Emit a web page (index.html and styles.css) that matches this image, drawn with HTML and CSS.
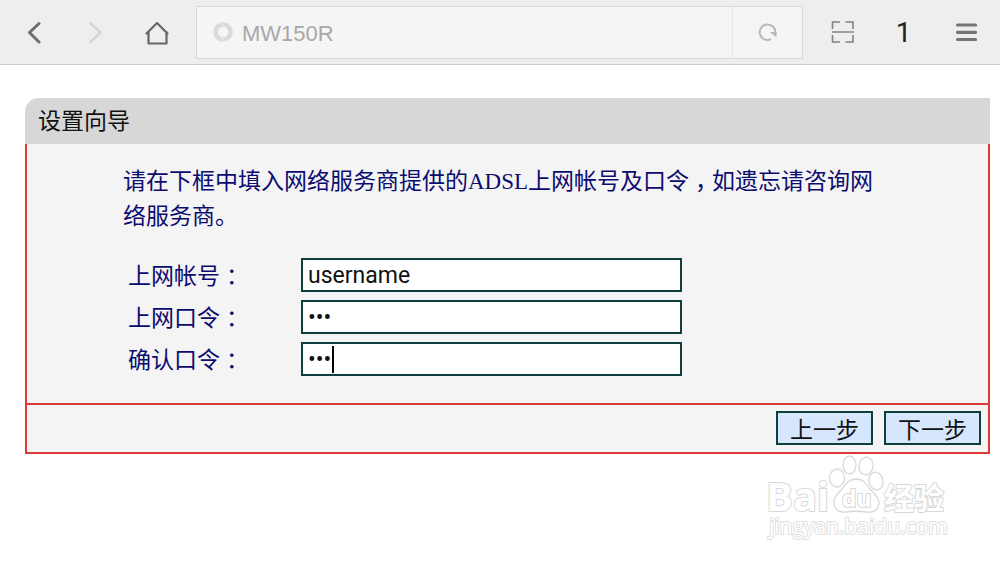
FILE: index.html
```html
<!DOCTYPE html>
<html lang="zh-CN">
<head>
    <meta charset="UTF-8">
    <meta name="viewport" content="width=device-width, initial-scale=1.0">
    <title>MW150R</title>
    <link rel="stylesheet" href="styles.css">
</head>
<body>
    <header class="toolbar">
        <button type="button" class="tool" aria-label="后退">
            <svg width="24" height="24" viewBox="0 0 24 24"><path d="M16 3.500 6.500 12.500 16 22" fill="none" stroke="#6e6e6e" stroke-width="3" stroke-linecap="round" stroke-linejoin="round"/></svg>
        </button>
        <button type="button" class="tool" aria-label="前进">
            <svg width="24" height="24" viewBox="0 0 24 24"><path d="M6.500 3.500 16.500 12.500 6.500 22" fill="none" stroke="#d6d6d6" stroke-width="2.800" stroke-linecap="round" stroke-linejoin="round"/></svg>
        </button>
        <a href="#" class="tool" aria-label="主页">
            <svg width="26" height="26" viewBox="0 0 26 26"><path d="M2.500 14.500 13 4 23.500 14.500M4.500 13V24.500H22.500V13" fill="none" stroke="#666" stroke-width="2.200" stroke-linecap="round" stroke-linejoin="round"/></svg>
        </a>
        <form class="address">
            <svg class="address-icon" width="20" height="20" viewBox="0 0 20 20">
                <circle cx="10" cy="10" r="7.500" fill="none" stroke="#dadada" stroke-width="4.600"/>
                <path d="M8 1 12 5M8 15 12 19.500" stroke="#f5f5f5" stroke-width="1"/>
            </svg>
            <input type="text" class="address-text" aria-label="地址" value="MW150R">
            <button type="button" class="reload" aria-label="刷新">
                <svg width="20" height="20" viewBox="0 0 20 20"><path d="M13 17.200A7.800 7.800 0 1 1 17.300 11" fill="none" stroke="#b8b8b8" stroke-width="2"/><path d="M12 10H18.500V15.500Z" fill="#b8b8b8"/></svg>
            </button>
        </form>
        <button type="button" class="tool" aria-label="扫一扫">
            <svg width="24" height="24" viewBox="0 0 24 24"><path d="M1.500 9V2H9M14.500 2H22V9M1.500 15V22H9M14.500 22H22V15M1 12H23" fill="none" stroke="#828282" stroke-width="1.600"/></svg>
        </button>
        <button type="button" class="tool tabs" aria-label="窗口">1</button>
        <button type="button" class="tool" aria-label="菜单">
            <svg width="24" height="24" viewBox="0 0 24 24"><path d="M4.500 5H22.500M4.500 12.300H22.500M4.500 19.500H22.500" stroke="#757575" stroke-width="3.200" stroke-linecap="round"/></svg>
        </button>
    </header>

    <main class="guide">
        <h1 class="guide-title">设置向导</h1>
        <form class="guide-form">
            <div class="guide-body">
                <p class="tip">请在下框中填入网络服务商提供的<span class="latin">ADSL</span>上网帐号及口令<span class="mark">，</span>如遗忘请咨询网络服务商。</p>
                <div class="fields">
                    <label for="username">上网帐号<span class="mark">：</span></label>
                    <input type="text" id="username" class="field" value="username">
                    <label for="password">上网口令<span class="mark">：</span></label>
                    <input type="password" id="password" class="field" value="123">
                    <label for="confirm">确认口令<span class="mark">：</span></label>
                    <div class="focused">
                        <input type="password" id="confirm" class="field" value="123">
                        <span class="caret"></span>
                    </div>
                </div>
            </div>
            <div class="guide-buttons">
                <button type="button">上一步</button>
                <button type="button">下一步</button>
            </div>
        </form>
    </main>

    <footer class="watermark">
        <svg width="184" height="88" viewBox="0 0 184 88">
            <g fill="#fff" stroke="#d8d8d8" stroke-width="1.300">
                <ellipse cx="72" cy="24" rx="7.500" ry="9"/>
                <ellipse cx="84.500" cy="11" rx="6.500" ry="9"/>
                <ellipse cx="101" cy="12" rx="7" ry="9" transform="rotate(8 101 12)"/>
                <ellipse cx="111" cy="27" rx="7" ry="9" transform="rotate(-14 111 27)"/>
                <path d="M91 25C83 25 80 31 76 36C71 41 68 45 69 50C70 56 75 59 81 58C88 57 95 57 102 58C109 59 114 55 114 49C114 43 109 39 105 35C101 30 99 25 91 25Z"/>
            </g>
            <g class="logo-text">
                <text x="1" y="57" font-size="40">Bai</text>
                <text x="77" y="53" font-size="23">du</text>
                <text x="119" y="55" font-size="30" class="logo-cn">经验</text>
            </g>
            <text x="4" y="80" font-size="21">jingyan.baidu.com</text>
        </svg>
    </footer>
</body>
</html>
```
FILE: styles.css
```css
*{
    box-sizing: border-box;
}
body{
    margin: 0;
    background-color: white;
    font-family: "Noto Sans CJK SC", sans-serif;
    font-size: 23px;
}
button, input{
    margin: 0;
    padding: 0;
    border: none;
    background: none;
    font: inherit;
    color: inherit;
}
svg{
    display: block;
}

/* browser bar */
.toolbar{
    display: flex;
    align-items: center;
    height: 65px;
    padding: 0 5px 0 4px;
    background-color: #eee;
    border-bottom: 1px solid #ccc;
}
.tool{
    display: flex;
    flex: none;
    align-items: center;
    justify-content: center;
    width: 61px;
    height: 64px;
}
.tabs{
    font-family: Roboto, sans-serif;
    font-size: 28px;
    color: #222;
}
.address{
    display: flex;
    flex: 1;
    align-items: center;
    height: 53px;
    margin: 0 9px;
    padding-left: 16px;
    background-color: #f5f5f5;
    border: 1px solid #d8d8d8;
}
.address-text{
    flex: 1;
    min-width: 0;
    margin-left: 9px;
    padding-top: 3px;
    font-family: "Liberation Sans", sans-serif;
    font-size: 22px;
    color: #a8a8a8;
}
.reload{
    display: flex;
    align-items: center;
    justify-content: center;
    width: 70px;
    height: 100%;
    border-left: 1px solid #e6e6e6;
}

/* setup guide */
.guide{
    margin: 33px 10px 0 25px;
}
.guide-title{
    margin: 0;
    padding: 0 13px 4px;
    background-color: #d7d7d7;
    border-top-left-radius: 14px;
    font-size: 23px;
    font-weight: normal;
    line-height: 42px;
    color: #111;
}
.guide-form{
    background-color: #f4f4f4;
    border: 2px solid #dc3a36;
    border-top: none;
}
.guide-body{
    padding: 18px 96px 27px;
    color: #0c0c70;
}
.tip{
    margin: 0 0 26px;
    line-height: 35px;
}
.latin{
    font-family: "Liberation Serif", serif;
    line-height: 1;
}
/* centre the full-width punctuation in its cell */
.mark{
    margin: 0 -6px 0 6px;
}
.fields{
    display: grid;
    grid-template-columns: 168px minmax(0, 381px);
    gap: 8px 5px;
    padding-left: 5px;
    line-height: 32px;
}
.field{
    width: 100%;
    height: 34px;
    padding: 0 5px;
    background-color: white;
    border: 2px solid #0c3f3d;
    font-family: Roboto, sans-serif;
    color: #111;
}
.focused{
    position: relative;
    height: 34px;
}
.focused .field{
    display: block;
}
.caret{
    position: absolute;
    top: 4px;
    left: 31px;
    width: 2px;
    height: 27px;
    background-color: black;
}
.guide-buttons{
    display: flex;
    justify-content: flex-end;
    gap: 11px;
    padding: 6px 7px 7px;
    border-top: 2px solid #dc3a36;
}
.guide-buttons button{
    width: 97px;
    height: 34px;
    background-color: #d5e6fd;
    border: 2px solid #0c3f3d;
    line-height: 30px;
    color: #111;
}

/* logo */
.watermark{
    display: flex;
    justify-content: flex-end;
    padding-right: 51px;
}
.watermark text{
    fill: white;
    stroke: #e0e0e0;
    stroke-width: 2px;
    stroke-linejoin: round;
    paint-order: stroke;
    font-family: "Open Sans", sans-serif;
}
.watermark .logo-text text{
    stroke: #d8d8d8;
    font-weight: bold;
}
.watermark .logo-text .logo-cn{
    font-family: "Noto Sans CJK SC", sans-serif;
}
```
